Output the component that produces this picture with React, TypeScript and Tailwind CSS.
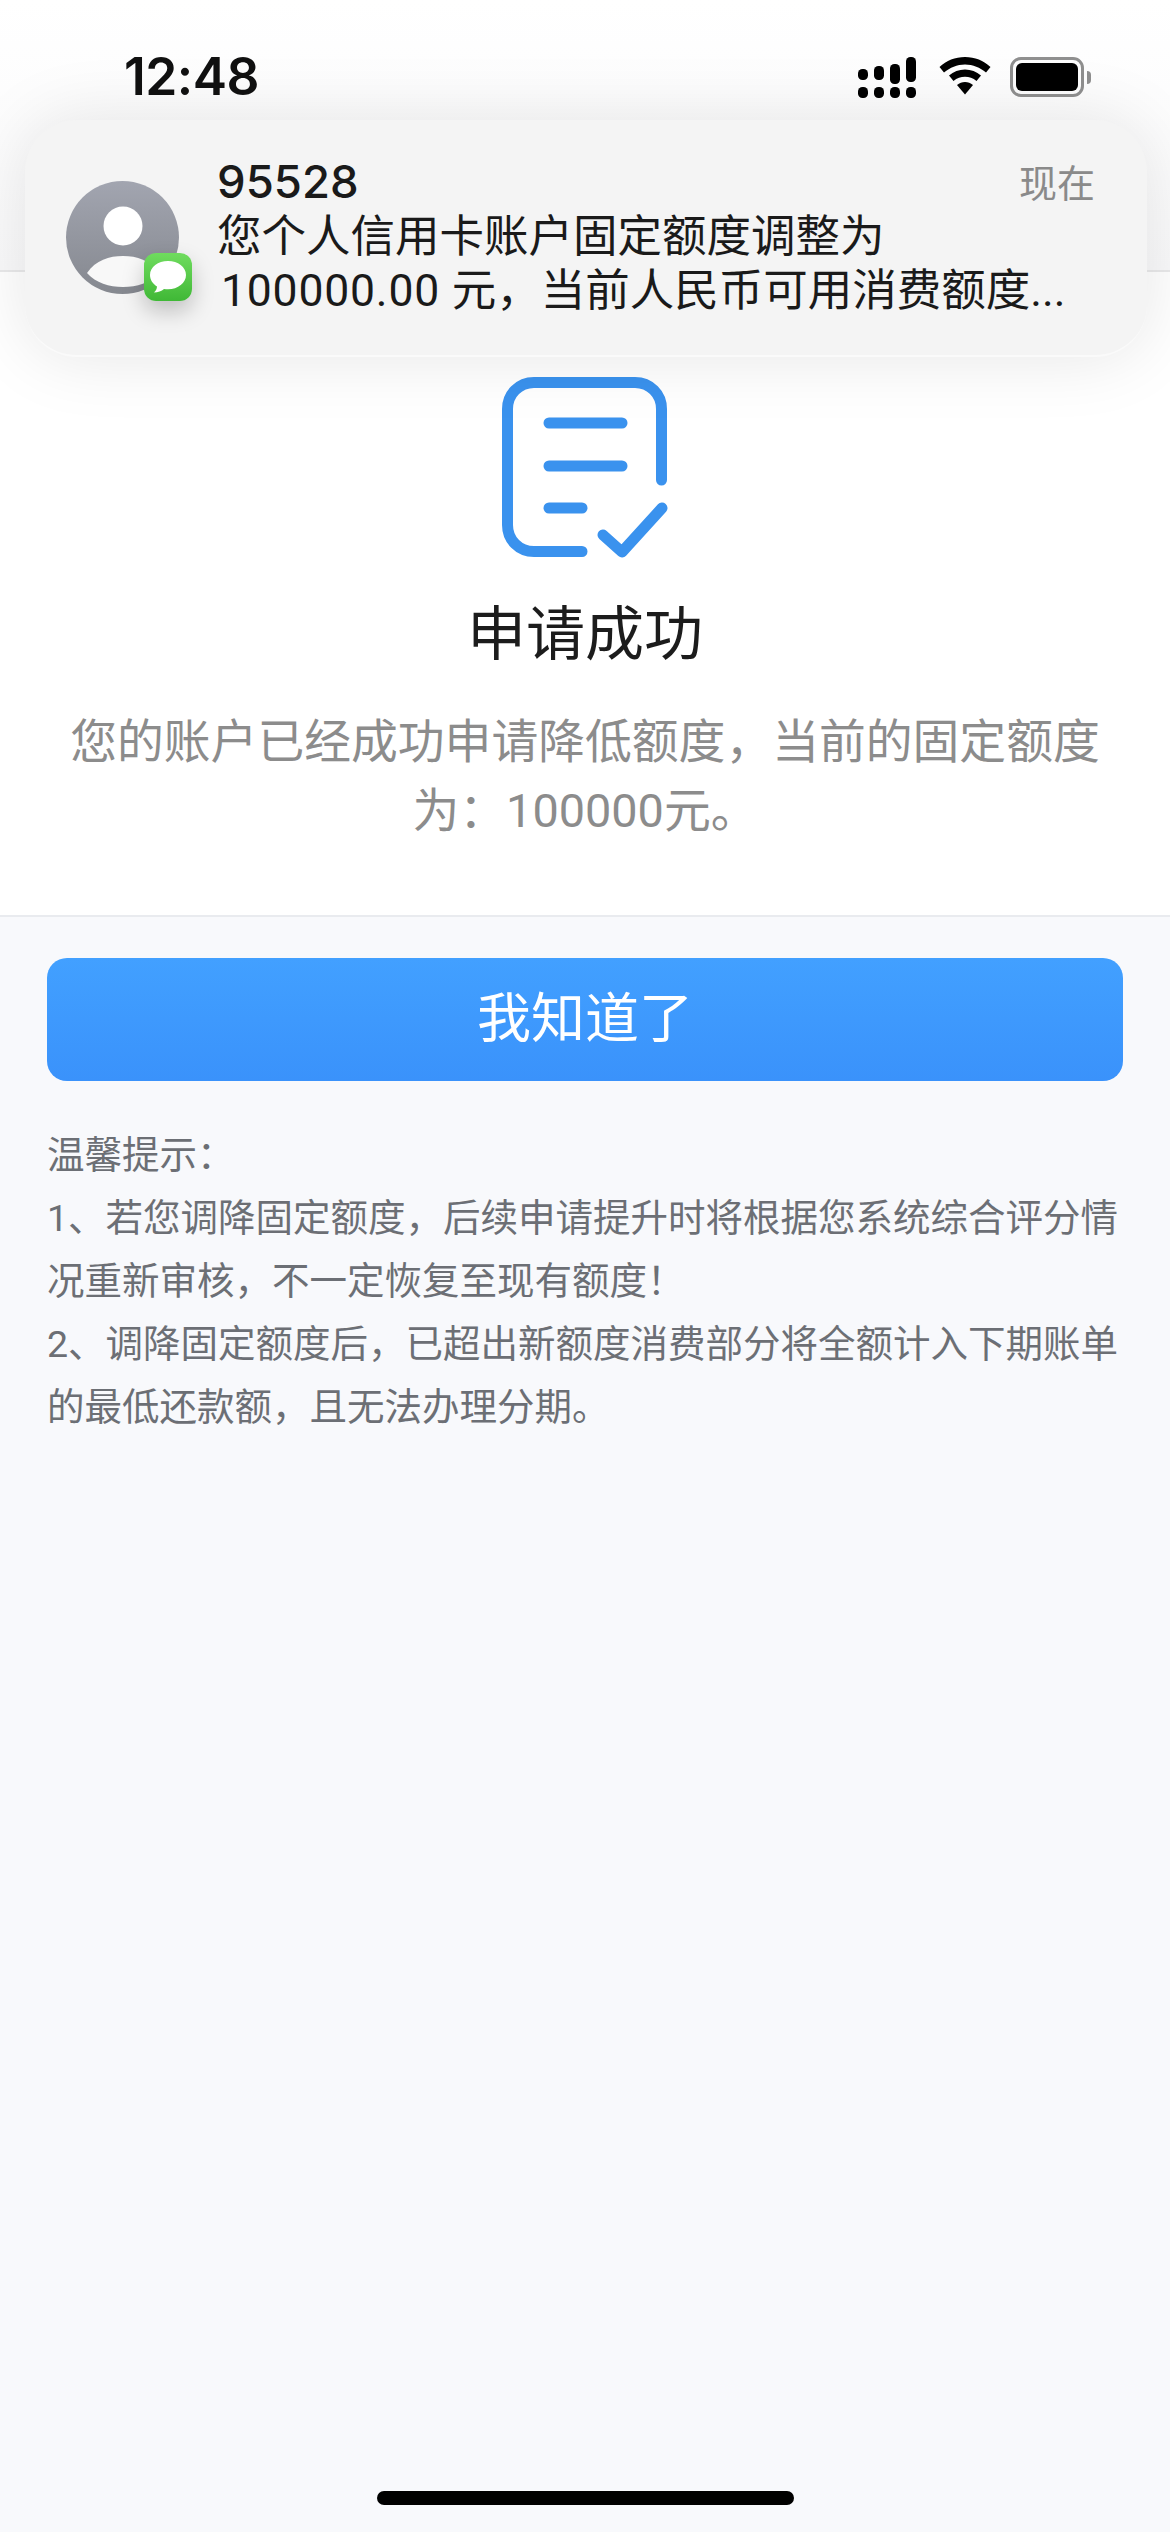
const CJK = "font-['Roboto','Noto_Sans_CJK_SC',sans-serif]";

function Signal() {
  const top = [[0, 12, 11], [16, 9, 14], [32, 7, 20], [48, 0, 25]];
  return (
    <svg width="60" height="42" viewBox="0 0 60 42" className="block">
      {top.map(([x, y, h]) => (
        <rect key={x} x={x} y={y} width="10" height={h} rx="4.500" fill="#000" />
      ))}
      {[0, 16, 32, 48].map((x) => (
        <rect key={x} x={x} y="30" width="10" height="11" rx="4.500" fill="#000" />
      ))}
    </svg>
  );
}

function Wifi() {
  return (
    <svg width="52" height="38" viewBox="0 0 52 38" className="block">
      <path d="M26 0C16 0 7.500 3.500 0.500 10L5 15.500C11 10.500 18 7.500 26 7.500C34 7.500 41 10.500 47 15.500L51.500 10C44.500 3.500 36 0 26 0Z" fill="#000" />
      <path d="M26 12.500C20 12.500 14.500 14.700 10 18.500L14.500 24C18 21.200 21.800 19.800 26 19.800C30.200 19.800 34 21.200 37.500 24L42 18.500C37.500 14.700 32 12.500 26 12.500Z" fill="#000" />
      <path d="M26 25C23 25 20.500 26 18 28L26 37.500L34 28C31.500 26 29 25 26 25Z" fill="#000" />
    </svg>
  );
}

function Battery() {
  return (
    <div className="flex items-center gap-[3px]">
      <div className="w-[74px] h-[40px] rounded-[11px] border-[3px] border-[#8f8f8f] p-[3px]">
        <div className="w-full h-full rounded-[6px] bg-black" />
      </div>
      <div className="w-[4px] h-[13px] rounded-r-full bg-[#8f8f8f]" />
    </div>
  );
}

function Avatar() {
  return (
    <div className="relative w-[126px] h-[120px] shrink-0">
      <svg width="113" height="113" viewBox="0 0 113 113" className="block">
        <defs>
          <linearGradient id="av" x1="0" y1="0" x2="0" y2="1">
            <stop offset="0" stopColor="#a2a5b0" />
            <stop offset="1" stopColor="#85888f" />
          </linearGradient>
          <clipPath id="avc">
            <circle cx="56.500" cy="56.500" r="56.500" />
          </clipPath>
        </defs>
        <circle cx="56.500" cy="56.500" r="56.500" fill="url(#av)" />
        <circle cx="57" cy="45" r="19.500" fill="#fff" />
        <path d="M21 92C30 79 43 75 57 75C71 75 84 79 93 92C84 102 71 106 57 106C43 106 30 102 21 92Z" fill="#f8f8f8" clipPath="url(#avc)" />
      </svg>
      <div className="absolute left-[78px] top-[72px] w-[48px] h-[48px] rounded-[12px] bg-gradient-to-b from-[#6fdc5e] to-[#3fb836] flex items-center justify-center shadow-[0_10px_22px_rgba(0,0,0,0.22)]">
        <svg width="38" height="34" viewBox="0 0 38 34" className="block">
          <path d="M19 1C9 1 1 7 1 15C1 20 4 24 8 26.500C8 29 6.500 31 5 32.500C9 32.500 12.500 31 15 29C16.300 29.200 17.600 29.300 19 29.300C29 29.300 37 22.900 37 15C37 7 29 1 19 1Z" fill="#fff" />
        </svg>
      </div>
    </div>
  );
}

function Notification() {
  return (
    <div className={`absolute left-[25px] top-[120px] w-[1122px] h-[237px] rounded-[52px] bg-[#f4f4f4] border-b-2 border-[#fafafa] shadow-[0_0_70px_rgba(0,0,0,0.1)] flex items-start pl-[41px] pr-[52px] pt-[32px] ${CJK}`}>
      <div className="mt-[29px]">
        <Avatar />
      </div>
      <div className="ml-[25px] flex-1 min-w-0 text-[#1a1a1a]">
        <div className="flex items-start justify-between h-[58px]">
          <span className="mt-[3px] text-[45.500px] leading-[54px] font-medium font-['Inter',sans-serif]">95528</span>
          <span className="mt-[6px] text-[38px] leading-[52px] text-[#8a8a8a]">现在</span>
        </div>
        <div className="text-[44.500px] leading-[54px] whitespace-nowrap">您个人信用卡账户固定额度调整为</div>
        <div className="text-[44.500px] leading-[54px] whitespace-nowrap pl-[4px]">
          <span className="tracking-[0.800px]">100000.00 </span>元，当前人民币可用消费额度...
        </div>
      </div>
    </div>
  );
}

function DocIcon() {
  return (
    <svg width="166" height="181" viewBox="0 0 166 181" fill="none" stroke="#3a92ee" strokeWidth="11" strokeLinecap="round" strokeLinejoin="round" className="block">
      <path d="M80 174.500H32C17 174.500 5.500 163 5.500 148V32C5.500 17 17 5.500 32 5.500H133C148 5.500 159.500 17 159.500 32V103" />
      <path d="M47 46H120" />
      <path d="M47 89H120" />
      <path d="M47 131H80" />
      <path d="M101 158L120 175L160 131" />
    </svg>
  );
}

export default function App() {
  return (
    <div className={`relative w-[1170px] h-[2532px] bg-[#f8f9fc] flex flex-col overflow-hidden ${CJK}`}>
      <header className="h-[272px] bg-gradient-to-b from-white to-[#f9f9fa] border-b-2 border-[#e9e9ea] flex items-start justify-between pl-[124px] pr-[79px] pt-[50px]">
        <span className="text-[51.500px] leading-[52px] font-semibold font-['Inter',sans-serif] tracking-[-0.500px] text-[#111]">12:48</span>
        <div className="flex items-start pt-[7px]">
          <Signal />
          <div className="ml-[21px] mr-[19px]">
            <Wifi />
          </div>
          <Battery />
        </div>
      </header>

      <section className="bg-white border-b-2 border-[#e9ebef] h-[645px] flex flex-col items-center pt-[105px]">
        <DocIcon />
        <h1 className="mt-[42px] text-[59px] leading-[70px] text-[#1c1c1c] font-normal">申请成功</h1>
        <p className="mt-[38px] w-[1050px] text-center text-[46.800px] leading-[69px] text-[#8c8c8c]">
          您的账户已经成功申请降低额度，当前的固定额度为：100000元。
        </p>
      </section>

      <main className="px-[47px] pt-[41px]">
        <button className="w-full h-[123px] rounded-[20px] bg-gradient-to-b from-[#42a0ff] to-[#3a92fb] text-white text-[54px] leading-[60px] flex items-center justify-center">
          我知道了
        </button>
        <div className="mt-[43px] text-[37.500px] leading-[63px] text-[#6c6f75]">
          <p>温馨提示：</p>
          <p>1、若您调降固定额度，后续申请提升时将根据您系统综合评分情况重新审核，不一定恢复至现有额度！</p>
          <p>2、调降固定额度后，已超出新额度消费部分将全额计入下期账单的最低还款额，且无法办理分期。</p>
        </div>
      </main>

      <div className="mt-auto mb-[27px] mx-auto w-[417px] h-[14px] rounded-full bg-black" />

      <Notification />
    </div>
  );
}
